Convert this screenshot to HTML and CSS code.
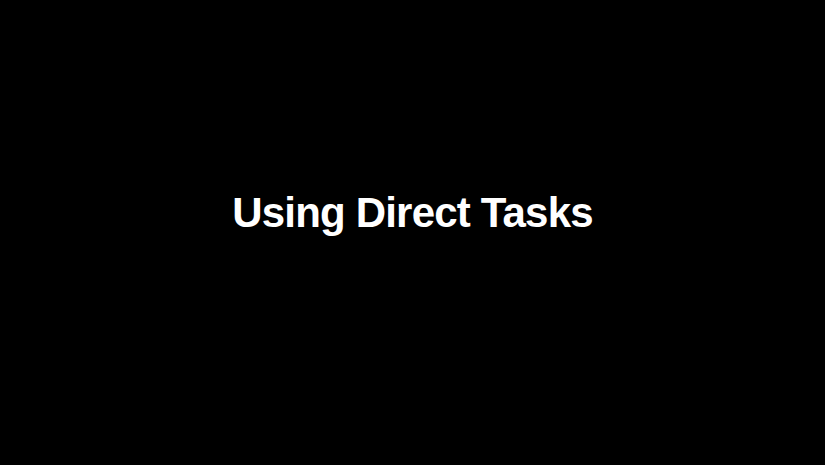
FILE: index.html
```html
<!DOCTYPE html>
<html>
<head>
<meta charset="utf-8">
<link rel="stylesheet" href="styles.css">
</head>
<body>
<div class="slide">
  <h1 class="title">Using Direct Tasks</h1>
</div>
</body>
</html>
```
FILE: styles.css
```css
html, body {
  margin: 0;
  padding: 0;
  background: #000;
}
.slide {
  width: 825px;
  height: 465px;
  display: flex;
  align-items: center;
  justify-content: center;
  background: #000;
}
.title {
  margin: 0;
  padding-bottom: 40px;
  font-family: "Liberation Sans", Arial, sans-serif;
  font-weight: bold;
  font-size: 42px;
  letter-spacing: -0.8px;
  line-height: 50px;
  color: #fff;
}
```
